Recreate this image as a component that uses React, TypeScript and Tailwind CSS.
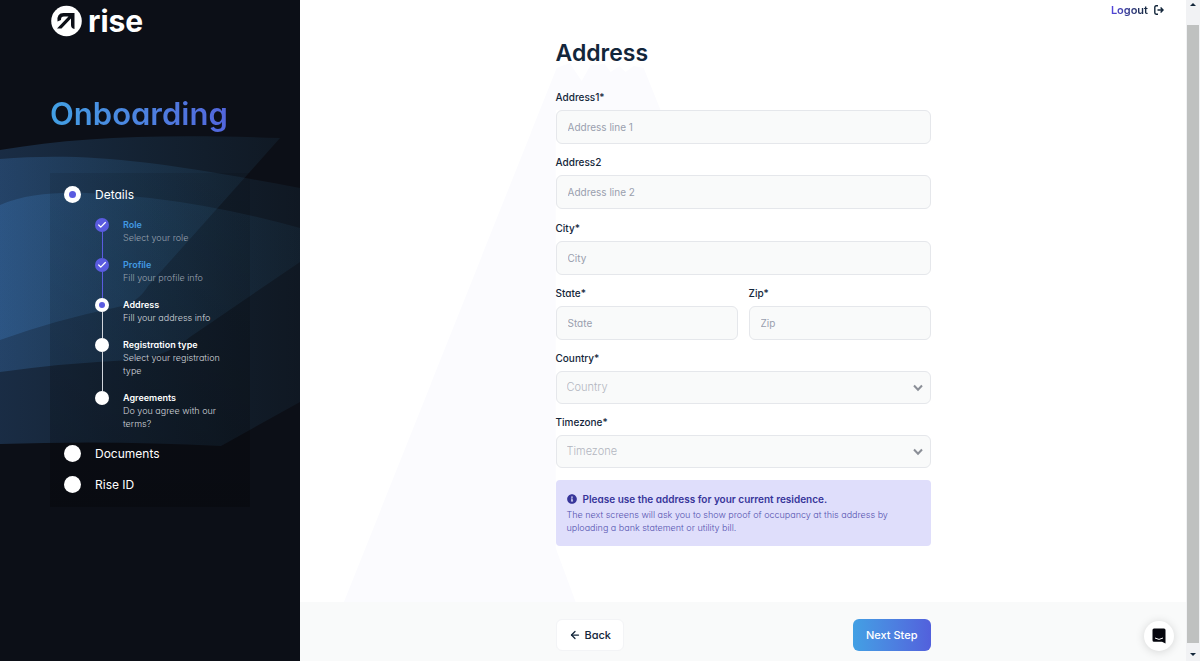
import type { ReactNode } from 'react'
import { ArrowLeft, Check } from 'lucide-react'
import { FaInfoCircle } from 'react-icons/fa'

type StepState = 'done' | 'current' | 'todo'

interface SubStep {
  title: string
  text: string
  state: StepState
}

const SUB_STEPS: SubStep[] = [
  { title: 'Role', text: 'Select your role', state: 'done' },
  { title: 'Profile', text: 'Fill your profile info', state: 'done' },
  { title: 'Address', text: 'Fill your address info', state: 'current' },
  { title: 'Registration type', text: 'Select your registration type', state: 'todo' },
  { title: 'Agreements', text: 'Do you agree with our terms?', state: 'todo' },
]

// ─── Sidebar ──────────────────────────────────────────────────────────────────

function Waves() {
  return (
    <svg className="absolute inset-0 h-full w-full" viewBox="0 0 300 661" preserveAspectRatio="none" aria-hidden="true">
      <defs>
        <linearGradient id="wave" x1="0" y1="0" x2="300" y2="0" gradientUnits="userSpaceOnUse">
          <stop offset="0" stopColor="#4a94e6" stopOpacity="0.22" />
          <stop offset="0.5" stopColor="#4294d6" stopOpacity="0.14" />
          <stop offset="1" stopColor="#3f8fc0" stopOpacity="0.07" />
        </linearGradient>
      </defs>
      <path d="M0 150 C80 136 170 134 280 138 L148 286 Q138 303 118 307 Q55 320 0 340 Z" fill="url(#wave)" />
      <path d="M0 159 C90 152 160 162 300 188 V402 L221 446 Q110 440 0 444 Z" fill="url(#wave)" />
      <path d="M0 205 C40 188 90 192 150 198 Q225 207 300 228 V262 L190 337 Q165 358 130 360 Q65 363 0 372 Z" fill="url(#wave)" />
    </svg>
  )
}

function Logo() {
  return (
    <div className="flex items-center gap-1.5 text-white">
      <svg className="h-8 w-8" viewBox="0 0 32 32" aria-hidden="true">
        <circle cx="16.5" cy="16" r="15.3" fill="#fff" />
        <path d="M7.5 16.5 Q6.5 8 13.5 8 H24.5 V24 Q21 23.6 21 20 V13.6 L11.5 23.6 H7 L18.5 11.6 H14 Q10.8 11.6 11 15 Z" fill="#0c0f17" />
      </svg>
      <span className="text-3xl leading-8 font-bold">rise</span>
    </div>
  )
}

function MainStep({ label, current = false }: { label: string; current?: boolean }) {
  return (
    <div className="flex items-center gap-3.5 text-xs text-white">
      <span className="flex h-[17px] w-[17px] items-center justify-center rounded-full bg-white">
        {current && <span className="h-[7px] w-[7px] rounded-full bg-[#5a5be0]" />}
      </span>
      {label}
    </div>
  )
}

function SubStepRow({ step, last }: { step: SubStep; last: boolean }) {
  const done = step.state === 'done'
  return (
    <li className="flex gap-3.5">
      <div className="flex flex-col items-center">
        <span className={`flex h-3.5 w-3.5 shrink-0 items-center justify-center rounded-full ${done ? 'bg-[#5a5be0]' : 'bg-white'}`}>
          {done && <Check className="h-2.5 w-2.5 text-white" strokeWidth={3} />}
          {step.state === 'current' && <span className="h-1.5 w-1.5 rounded-full bg-[#5a5be0]" />}
        </span>
        {!last && <span className={`w-px flex-1 ${done ? 'bg-[#5a5be0]' : 'bg-gray-300'}`} />}
      </div>
      <div className={`text-[9px] leading-[13px] ${last ? '' : 'pb-3.5'}`}>
        <p className={`font-semibold ${done ? 'text-[#4299e1]' : 'text-white'}`}>{step.title}</p>
        <p className={`font-light ${done ? 'text-gray-400' : 'text-gray-300'}`}>{step.text}</p>
      </div>
    </li>
  )
}

function Sidebar() {
  return (
    <aside className="relative w-1/4 shrink-0 bg-[#0c0f17]">
      <Waves />
      <div className="relative px-[50px] pt-[5px]">
        <Logo />
        <h2 className="mt-[57px] w-fit bg-linear-to-r from-[#42a0e4] to-[#5265dc] bg-clip-text text-[31px] leading-10 font-semibold text-transparent">
          Onboarding
        </h2>
        <nav className="mt-[39px] bg-linear-to-b from-black/10 to-black/25 px-3.5 pt-[13px] pb-3.5">
          <MainStep label="Details" current />
          <ol className="mt-[15px] mb-[15px] pl-[31px]">
            {SUB_STEPS.map((step, i) => (
              <SubStepRow key={step.title} step={step} last={i === SUB_STEPS.length - 1} />
            ))}
          </ol>
          <div className="flex flex-col gap-3.5">
            <MainStep label="Documents" />
            <MainStep label="Rise ID" />
          </div>
        </nav>
      </div>
    </aside>
  )
}

// ─── Form ─────────────────────────────────────────────────────────────────────

function Field({ id, label, placeholder }: { id: string; label: string; placeholder: string }) {
  return (
    <div className="flex-1 min-w-0">
      <label htmlFor={id} className="block text-[10px] leading-4 font-medium">{label}</label>
      <input
        id={id}
        placeholder={placeholder}
        className="mt-[5px] h-[34px] w-full rounded-md border border-gray-200 bg-[#f9fafa] px-[11px] text-[10px] placeholder-[#9a9fae] outline-none"
      />
    </div>
  )
}

function SelectField({ id, label }: { id: string; label: string }) {
  return (
    <div>
      <label htmlFor={id} className="block text-[10px] leading-4 font-medium">{label}*</label>
      <div className="relative mt-[5px]">
        <select
          id={id}
          defaultValue=""
          className="h-[33px] w-full appearance-none rounded-md border border-gray-200 bg-[#f9fafa] px-2.5 text-[11px] font-light text-[#b3b6c0] outline-none"
        >
          <option value="">{label}</option>
        </select>
        <svg className="pointer-events-none absolute top-3 right-2 h-2.5 w-2.5" viewBox="0 0 10 10" fill="none" stroke="#8b8f97" strokeWidth="2" aria-hidden="true">
          <path d="M1 2.5 L5 6.8 L9 2.5" />
        </svg>
      </div>
    </div>
  )
}

function Mountain() {
  return (
    <svg className="absolute inset-0 h-full w-full" viewBox="0 0 887 602" preserveAspectRatio="none" aria-hidden="true">
      <path
        d="M44 602 L257 68 L270 63 L282 81 L291 65 L305 64 L311 72 L320 66 L326 72 L334 66 L344 68 L361 110 L256 110 V548 L276 602 Z"
        fill="#fbfbfe"
      />
    </svg>
  )
}

function Column({ children, className = '' }: { children: ReactNode; className?: string }) {
  return <div className={`relative mx-auto w-full max-w-[375px] ${className}`}>{children}</div>
}

function LogoutIcon() {
  return (
    <svg className="h-2.5 w-2.5" viewBox="0 0 10 10" fill="none" stroke="#13263a" strokeWidth="1.4" aria-hidden="true">
      <path d="M4 0.8 H2.2 Q0.8 0.8 0.8 2.2 V7.8 Q0.8 9.2 2.2 9.2 H4 M3.5 5 H9 M6.6 2.6 L9 5 L6.6 7.4" />
    </svg>
  )
}

function ScrollBar() {
  return (
    <div className="flex w-3.5 shrink-0 flex-col items-center justify-between bg-[#f1f2f4] px-px" aria-hidden="true">
      <svg className="h-[25px] w-2 shrink-0" viewBox="0 0 8 25"><path d="M1 6 L4 3 L7 6 Z" fill="#13263a" /></svg>
      <div className="w-full flex-1 bg-[#bfc1c0]" />
      <svg className="h-[18px] w-2 shrink-0" viewBox="0 0 8 18"><path d="M1 10 L4 13 L7 10 Z" fill="#13263a" /></svg>
    </div>
  )
}

export default function App() {
  return (
    <div className="flex min-h-screen bg-white font-[Inter,sans-serif] text-[#13263a] [font-feature-settings:'cv11']">
      <Sidebar />
      <div className="relative flex min-w-0 flex-1 flex-col">
        <main className="relative flex-1 pb-12">
          <Mountain />
          <header className="relative flex justify-end pt-0.5 pr-[22px]">
            <a href="#logout" className="flex items-center gap-1.5 text-[11px] leading-4 font-semibold">
              <span className="bg-linear-to-r from-[#5546e0] to-[#13263a] bg-clip-text text-transparent">Logout</span>
              <LogoutIcon />
            </a>
          </header>
          <Column className="pt-5">
            <h1 className="text-[23px] leading-[30px] font-semibold">Address</h1>
            <form className="mt-[21px] flex flex-col gap-[11px]">
              <div className="flex flex-col gap-2.5">
                <Field id="address1" label="Address1*" placeholder="Address line 1" />
                <Field id="address2" label="Address2" placeholder="Address line 2" />
              </div>
              <div className="flex flex-col gap-2.5">
                <Field id="city" label="City*" placeholder="City" />
                <div className="flex gap-[11px]">
                  <Field id="state" label="State*" placeholder="State" />
                  <Field id="zip" label="Zip*" placeholder="Zip" />
                </div>
                <SelectField id="country" label="Country" />
                <SelectField id="timezone" label="Timezone" />
              </div>
            </form>
            <div className="mt-3 rounded bg-[#dfdefb] px-[11px] pt-2.5 pb-3 text-[#37359a]">
              <p className="flex items-center gap-1.5 text-[10px] leading-[18px] font-semibold">
                <FaInfoCircle className="h-2.5 w-2.5" />
                Please use the address for your current residence.
              </p>
              <p className="text-[9px] leading-[13px] font-light text-[#5452b0]">
                The next screens will ask you to show proof of occupancy at this address by uploading a bank statement or utility bill.
              </p>
            </div>
          </Column>
        </main>
        <footer className="bg-[#f9fafa] pt-[17px] pb-2.5">
          <Column className="flex justify-between">
            <button className="flex h-8 items-center gap-1 rounded-md border border-gray-100 bg-white px-3 text-[11px] font-medium">
              <ArrowLeft className="h-3 w-3" strokeWidth={2.5} />
              Back
            </button>
            <button className="h-8 rounded-md bg-linear-to-r from-[#42a0e4] to-[#5260dc] px-[13px] text-[11px] font-medium text-white">
              Next Step
            </button>
          </Column>
        </footer>
        <button
          aria-label="Open chat"
          className="absolute right-3 bottom-2.5 flex h-[30px] w-[30px] items-center justify-center rounded-full bg-white shadow-[0_1px_10px_rgba(0,0,0,0.15)]"
        >
          <svg className="h-4 w-3.5" viewBox="0 0 14 16" aria-hidden="true">
            <path d="M2 0.5 H12 Q13.5 0.5 13.5 2 V15.5 L10 13.8 H2 Q0.5 13.8 0.5 12.3 V2 Q0.5 0.5 2 0.5 Z" fill="#05060d" />
            <path d="M3 10 Q7 12.8 11 10" fill="none" stroke="#fff" />
          </svg>
        </button>
      </div>
      <ScrollBar />
    </div>
  )
}
